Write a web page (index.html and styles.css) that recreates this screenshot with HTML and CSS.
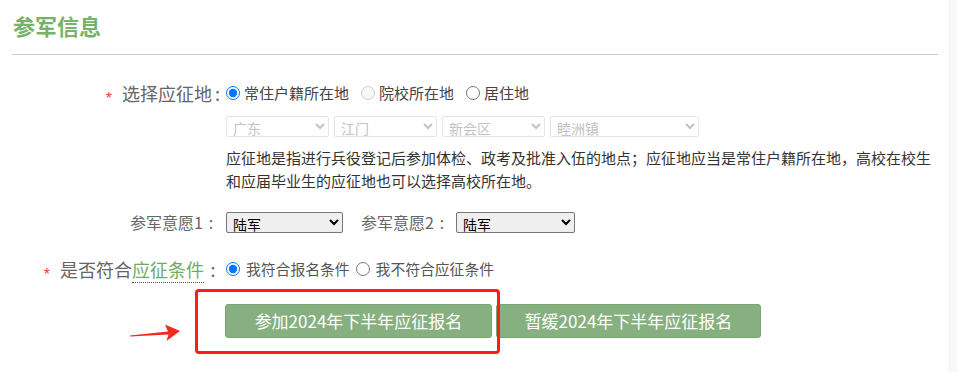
FILE: index.html
```
<!DOCTYPE html>
<html lang="zh-CN">
<head>
<meta charset="utf-8">
<title>参军信息</title>
<link rel="stylesheet" href="styles.css">
</head>
<body>
<div class="page">
  <div class="main">
    <h2 class="title">参军信息</h2>
    <div class="form">
      <div class="row row-place">
        <div class="lbl lbl-big"><span class="req">*</span>选择应征地<span class="colon-sm">:</span></div>
        <div class="field">
          <div class="radios">
            <label class="opt"><input type="radio" name="place" checked>常住户籍所在地</label>
            <label class="opt"><input type="radio" name="place" disabled>院校所在地</label>
            <label class="opt"><input type="radio" name="place">居住地</label>
          </div>
          <div class="selects">
            <select class="sel-area" disabled><option>广东</option></select>
            <select class="sel-area" disabled><option>江门</option></select>
            <select class="sel-area" disabled><option>新会区</option></select>
            <select class="sel-area sel-wide" disabled><option>睦洲镇</option></select>
          </div>
          <p class="desc">应征地是指进行兵役登记后参加体检、政考及批准入伍的地点；应征地应当是常住户籍所在地，高校在校生和应届毕业生的应征地也可以选择高校所在地。</p>
        </div>
      </div>

      <div class="row row-wish">
        <div class="lbl lbl-wish">参军意愿1<span class="colon">:</span></div>
        <div class="field wish">
          <select class="sel-wish"><option>陆军</option></select>
          <span class="wish-lbl">参军意愿2<span class="colon">:</span></span>
          <select class="sel-wish sel-wish2"><option>陆军</option></select>
        </div>
      </div>

      <div class="row row-cond">
        <div class="lbl lbl-big lbl-cond"><span class="req">*</span>是否符合<span class="term">应征条件</span><span class="colon colon-big">:</span></div>
        <div class="field radios radios-sm">
          <label class="opt"><input type="radio" name="cond" checked>我符合报名条件</label>
          <label class="opt"><input type="radio" name="cond">我不符合应征条件</label>
        </div>
      </div>

      <div class="actions">
        <button class="btn" type="button">参加2024年下半年应征报名</button>
        <button class="btn btn-2" type="button">暂缓2024年下半年应征报名</button>
        <div class="mark"></div>
        <svg class="arrow" width="52" height="20" viewBox="0 0 52 20" aria-hidden="true">
          <path d="M0 12.4 L38 8.4 L35 1.5 L50 8 L36.5 18 L38.5 11.4 L0 13.4 Z" fill="#f22a1e"/>
        </svg>
      </div>
    </div>
  </div>
  <div class="side"></div>
</div>
</body>
</html>
```

FILE: styles.css
```
* { box-sizing: border-box; }

html, body {
  margin: 0;
  padding: 0;
  background: #fff;
}

body {
  font-family: "Noto Sans CJK SC", "Microsoft YaHei", "Noto Sans", sans-serif;
  color: #333;
}

.page {
  display: flex;
  width: 957px;
  height: 372px;
  overflow: hidden;
}

.main {
  flex: 1;
  padding: 0 11px 0 12px;
}

.side {
  width: 8px;
  background: #f8f8f8;
  border-left: 1px solid #f1f1f1;
}

.title {
  margin: 0;
  padding: 8px 0 12px 1px;
  font-size: 22px;
  line-height: 34px;
  font-weight: bold;
  color: #78b26a;
  border-bottom: 1px solid #cccccc;
}

.form {
  padding-top: 26px;
}

.row {
  display: flex;
  align-items: flex-start;
}

.lbl {
  width: 214px;
  flex: none;
  text-align: right;
  padding-right: 6px;
  font-size: 16px;
  line-height: 24px;
  color: #666;
  white-space: nowrap;
}

.lbl-big {
  font-size: 18px;
  padding-right: 6px;
}

.lbl-wish {
  padding-right: 7px;
}

.lbl-cond {
  padding-right: 4px;
}

.colon-sm {
  margin-left: 3px;
}

.colon {
  display: inline-block;
  width: 16px;
  text-align: center;
}

.colon-big {
  width: 18px;
}

.req {
  color: #f0413a;
  font-family: "Liberation Sans", Arial, sans-serif;
  font-size: 16px;
  margin-right: 10px;
  position: relative;
  top: 3px;
}

.field {
  flex: 1;
  min-width: 0;
}

.radios {
  display: flex;
  align-items: center;
  height: 24px;
  font-size: 15px;
  color: #444;
}

.opt {
  display: inline-flex;
  align-items: center;
  margin-right: 12px;
  line-height: 24px;
  white-space: nowrap;
}

.opt input {
  margin: 0 4px 0 0;
  width: 14px;
  height: 14px;
}

.radios-sm {
  font-size: 14.8px;
  color: #555;
}

.radios-sm .opt {
  margin-right: 6px;
}

.radios-sm .opt input {
  margin-right: 6px;
}

.selects {
  display: flex;
  gap: 5px;
  margin-top: 11px;
}

select {
  font-family: "Noto Sans CJK SC", "Microsoft YaHei", sans-serif;
  font-size: 14px;
  height: 21px;
  padding: 0 2px;
  margin: 0;
}

.sel-area {
  width: 103px;
  color: #aaa;
  background: #fff;
  border: 1px solid #dcdcdc;
  border-radius: 2px;
}

.sel-wide {
  width: 149px;
}

.desc {
  margin: 9px 0 0;
  font-size: 15px;
  line-height: 23px;
  color: #333;
}

.row-wish {
  margin-top: 18px;
}

.wish {
  display: flex;
  align-items: center;
  height: 24px;
}

.sel-wish {
  width: 117px;
  color: #000;
  font-size: 14px;
  border: 1px solid #767676;
  border-radius: 2px;
}

.sel-wish2 {
  width: 119px;
}

.wish-lbl {
  margin-left: 18px;
  margin-right: 6px;
  font-size: 16px;
  color: #666;
  white-space: nowrap;
}

.row-cond {
  margin-top: 23px;
}

.term {
  color: #72aa63;
  border-bottom: 1px dotted #555;
}

.actions {
  position: relative;
  display: flex;
  gap: 4px;
  margin-top: 20px;
  padding-left: 213px;
}

.btn {
  height: 34px;
  width: 267px;
  padding: 0;
  font-family: "Noto Sans CJK SC", "Microsoft YaHei", sans-serif;
  font-size: 17px;
  line-height: 32px;
  color: #fff;
  background: #87b080;
  border: 1px solid #7aa672;
  border-radius: 3px;
}

.btn-2 {
  width: 265px;
}

.mark {
  position: absolute;
  left: 183px;
  top: -15px;
  width: 305px;
  height: 65px;
  border: 3px solid #ff1e14;
  border-radius: 4px;
}

.arrow {
  position: absolute;
  left: 118px;
  top: 19px;
}
```
